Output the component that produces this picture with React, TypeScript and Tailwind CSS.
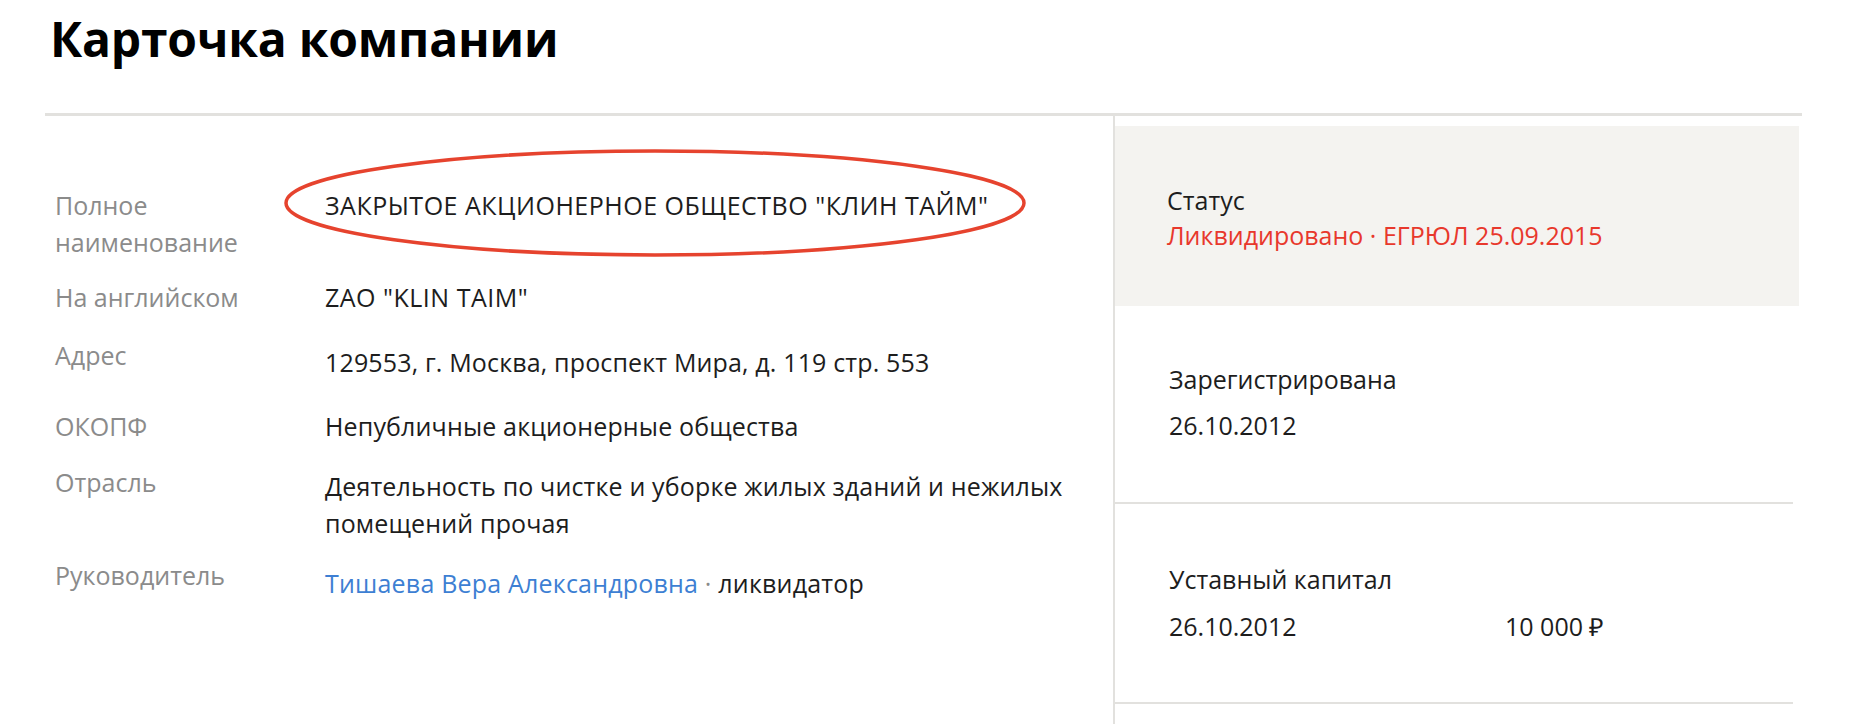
import React from 'react';

const rows = [
  { label: ['Полное', 'наименование'], value: 'ЗАКРЫТОЕ АКЦИОНЕРНОЕ ОБЩЕСТВО "КЛИН ТАЙМ"', mt: 'mt-0', lift: 'mt-0', caps: true },
  { label: ['На английском'], value: 'ZAO "KLIN TAIM"', mt: 'mt-[18px]', lift: 'mt-0', caps: true },
  { label: ['Адрес'], value: '129553, г. Москва, проспект Мира, д. 119 стр. 553', mt: 'mt-[28px]', lift: '-mt-[7px]', caps: false },
  { label: ['ОКОПФ'], value: 'Непубличные акционерные общества', mt: 'mt-[27px]', lift: 'mt-0', caps: false },
  { label: ['Отрасль'], value: 'Деятельность по чистке и уборке жилых зданий и нежилых помещений прочая', mt: 'mt-[23px]', lift: '-mt-[4px]', caps: false },
];

export default function App() {
  return (
    <div className="min-h-[724px] w-full bg-white font-['Open_Sans',sans-serif] text-[#1d1d1d]">
      <h1 className="pl-[50px] pt-[10px] text-[48px] font-bold leading-[58px] tracking-[-0.2px] text-black">Карточка компании</h1>

      <div className="ml-[45px] mt-[45px] w-[1757px] border-t-[3px] border-[#e2e1de]">
        <div className="flex">
          {/* left: company details */}
          <div className="relative w-[1068px] pl-[10px] pt-[71px] text-[25px] leading-[37px]">
            {rows.map((row) => (
              <div key={row.label[0]} className={`flex ${row.mt}`}>
                <div className={`w-[270px] shrink-0 text-[#8b8b8b] ${row.lift}`}>
                  {row.label.map((l) => (
                    <div key={l}>{l}</div>
                  ))}
                </div>
                <div className={`w-[775px] ${row.caps ? 'tracking-[0.5px]' : 'tracking-[0.15px]'}`}>{row.value}</div>
              </div>
            ))}
            <div className="mt-[23px] flex">
              <div className="-mt-[8px] w-[270px] shrink-0 text-[#8b8b8b]">Руководитель</div>
              <div className="tracking-[0.2px]">
                <a href="#" className="text-[#3d7fd3]">Тишаева Вера Александровна</a>
                <span className="text-[#8b8b8b]"> · </span>
                <span>ликвидатор</span>
              </div>
            </div>

            <svg className="absolute left-[238px] top-[32px]" width="744" height="110" viewBox="0 0 744 110">
              <ellipse cx="372" cy="55" rx="369" ry="52" fill="none" stroke="#e6432e" strokeWidth="3.5" />
            </svg>
          </div>

          {/* right: status panel */}
          <div className="flex-1 border-l-2 border-[#e2e1de] pb-[40px] text-[25px] leading-[37px]">
            <div className="mt-[10px] w-[684px] bg-[#f4f3f0] pb-[53px] pl-[52px] pt-[57px] leading-[35px]">
              <div>Статус</div>
              <div className="text-[#e8382c]">Ликвидировано · ЕГРЮЛ 25.09.2015</div>
            </div>

            <div className="w-[678px] border-b-2 border-[#e2e1de] pb-[58px] pl-[54px] pt-[55px]">
              <div className="mb-[9px]">Зарегистрирована</div>
              <div>26.10.2012</div>
            </div>

            <div className="w-[678px] border-b-2 border-[#e2e1de] pb-[57px] pl-[54px] pt-[57px]">
              <div className="mb-[10px]">Уставный капитал</div>
              <div className="grid grid-cols-[336px_1fr]">
                <span>26.10.2012</span>
                <span>10 000 ₽</span>
              </div>
            </div>
          </div>
        </div>
      </div>
    </div>
  );
}
